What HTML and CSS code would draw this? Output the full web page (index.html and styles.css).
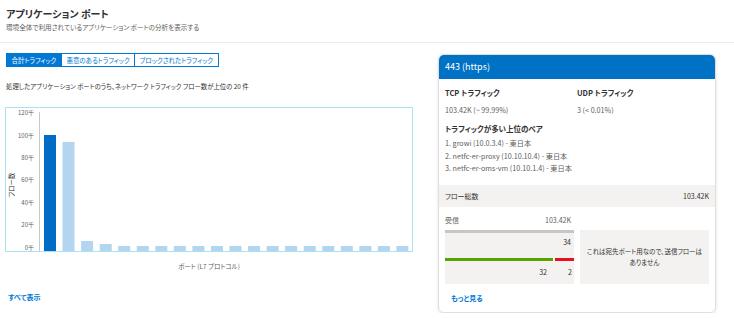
FILE: index.html
```html
<!DOCTYPE html>
<html lang="ja">
<head>
    <meta charset="UTF-8">
    <meta name="viewport" content="width=device-width, initial-scale=1.0">
    <title>アプリケーション ポート</title>
    <link rel="stylesheet" href="styles.css">
</head>
<body>
    <header class="page-head">
        <h1>アプリケーション ポート</h1>
        <p class="sub">環境全体で利用されているアプリケーション ポートの分析を表示する</p>
    </header>
    <main class="content">
        <section class="left">
            <div class="tabs">
                <span class="tab active">合計トラフィック</span>
                <span class="tab">悪意のあるトラフィック</span>
                <span class="tab">ブロックされたトラフィック</span>
            </div>
            <p class="desc">処理したアプリケーション ポートのうち、ネットワーク トラフィック フロー数が上位の 20 件</p>
            <div class="chart">
                <svg width="406" height="143" viewBox="0 0 406 143">
                    <text class="y-title" transform="translate(8 77) rotate(-90)">フロー数</text>
                    <g class="y-labels">
                        <text x="28" y="7">120千</text>
                        <text x="28" y="30">100千</text>
                        <text x="28" y="52">80千</text>
                        <text x="28" y="74">60千</text>
                        <text x="28" y="97">40千</text>
                        <text x="28" y="119">20千</text>
                        <text x="28" y="142">0千</text>
                    </g>
                    <line x1="33.5" y1="4" x2="33.5" y2="143" stroke="#c8c8c8" stroke-width="1"/>
                    <g id="bars"></g>
                </svg>
            </div>
            <p class="x-title">ポート (L7 プロトコル)</p>
            <a class="link" href="#">すべて表示</a>
        </section>

        <aside class="card">
            <div class="card-head">443 (https)</div>
            <div class="card-body">
                <div class="proto">
                    <div>
                        <div class="strong">TCP トラフィック</div>
                        <div class="muted">103.42K (~ 99.99%)</div>
                    </div>
                    <div>
                        <div class="strong">UDP トラフィック</div>
                        <div class="muted">3 (&lt; 0.01%)</div>
                    </div>
                </div>
                <div class="strong pairs-title">トラフィックが多い上位のペア</div>
                <ol class="pairs">
                    <li>1. growi (10.0.3.4) - 東日本</li>
                    <li>2. netfc-er-proxy (10.10.10.4) - 東日本</li>
                    <li>3. netfc-er-oms-vm (10.10.1.4) - 東日本</li>
                </ol>
            </div>
            <div class="total-row">
                <span>フロー総数</span>
                <span>103.42K</span>
            </div>
            <div class="flows">
                <div class="flow-col">
                    <div class="flow-label"><span>受信</span><span>103.42K</span></div>
                    <div class="flow-box">
                        <div class="bar-gray"></div>
                        <div class="num-right">34</div>
                        <div class="split">
                            <div class="seg seg-ok"><div class="bar-green"></div><span>32</span></div>
                            <div class="seg seg-bad"><div class="bar-red"></div><span>2</span></div>
                        </div>
                    </div>
                </div>
                <div class="flow-note"><span class="nowrap">これは宛先ポート用なので、送信フローは</span><span>ありません</span></div>
            </div>
            <a class="link more" href="#">もっと見る</a>
        </aside>
    </main>
    <script>
        // bar heights in px taken from the flow counts
        const heights = [116, 109, 10, 7, 5, 5, 5, 5, 5, 5, 5, 5, 5, 5, 5, 5, 5, 5, 5, 5];
        const g = document.getElementById('bars');
        heights.forEach(function (h, i) {
            const r = document.createElementNS('http://www.w3.org/2000/svg', 'rect');
            r.setAttribute('x', (38 + i * 18.55).toFixed(1));
            r.setAttribute('y', 143 - h);
            r.setAttribute('width', 12);
            r.setAttribute('height', h);
            r.setAttribute('fill', i === 0 ? '#006cc4' : '#b4d5ef');
            g.appendChild(r);
        });
    </script>
</body>
</html>
```

FILE: styles.css
```css
body {
    font-family: "Noto Sans CJK JP", "Noto Sans", sans-serif;
    font-feature-settings: "palt";
    color: #323130;
    background: #fff;
    margin: 0;
}
p, h1, ol {
    margin: 0;
    padding: 0;
}
.page-head {
    height: 43px;
    box-sizing: border-box;
    padding: 7px 6px 0;
    border-bottom: 1px solid #edebe9;
}
.page-head h1 {
    font-size: 10px;
    font-weight: 700;
    line-height: 14px;
}
.sub {
    font-size: 6.6px;
    line-height: 12px;
    color: #605e5c;
}
.content {
    display: flex;
    align-items: flex-start;
}
.left {
    width: 408px;
    padding: 10px 0 0 5px;
}
.tabs {
    display: flex;
    margin-left: 1px;
}
.tab {
    font-size: 6.5px;
    height: 14px;
    line-height: 12px;
    box-sizing: border-box;
    padding: 0 4.5px;
    border: 1px solid #0078d4;
    border-left: none;
    background: #fff;
    color: #0078d4;
}
.tab:first-child {
    border-left: 1px solid #0078d4;
}
.tab.active {
    background: #0078d4;
    color: #fff;
}
.desc {
    font-size: 6.4px;
    line-height: 12px;
    margin: 14px 0 0 1px;
}
.chart {
    margin-top: 14px;
    height: 145px;
    box-sizing: border-box;
    border: 1px solid #a9e2f0;
}
.chart svg {
    display: block;
}
.y-labels text {
    font-size: 6px;
    fill: #605e5c;
    text-anchor: end;
}
.y-title {
    font-size: 6.5px;
    fill: #323130;
    text-anchor: middle;
}
.x-title {
    font-size: 6.5px;
    line-height: 12px;
    text-align: center;
    margin-top: 8px;
    color: #605e5c;
}
.link {
    display: block;
    font-size: 7px;
    line-height: 12px;
    color: #0078d4;
    text-decoration: none;
    font-weight: 700;
}
.left .link {
    margin: 19px 0 0 3px;
}
.card {
    width: 278px;
    margin: 11px 0 0 25px;
    border: 1px solid #e1dfdd;
    border-radius: 6px;
    box-shadow: 0 1px 3px rgba(0, 0, 0, 0.12);
    overflow: hidden;
    box-sizing: border-box;
}
.card-head {
    background: #0072c6;
    color: #fff;
    font-size: 9px;
    height: 24px;
    line-height: 24px;
    padding: 0 6px;
}
.card-body {
    padding: 8px 6px 0;
}
.proto {
    display: grid;
    grid-template-columns: 132px 1fr;
}
.strong {
    font-size: 7.5px;
    font-weight: 700;
    line-height: 12px;
}
.muted {
    font-size: 7.2px;
    line-height: 12px;
    margin-top: 5px;
    color: #605e5c;
}
.pairs-title {
    margin-top: 7px;
}
.pairs {
    list-style: none;
    margin-top: 2px;
    font-size: 7.2px;
    color: #605e5c;
}
.pairs li {
    line-height: 12.5px;
}
.total-row {
    display: flex;
    justify-content: space-between;
    margin-top: 10px;
    background: #f3f2f1;
    height: 22px;
    line-height: 22px;
    padding: 0 6px 0 6px;
    font-size: 7px;
}
.flows {
    display: grid;
    grid-template-columns: 129px 129px;
    gap: 6px;
    padding: 0 6px;
    align-items: end;
}
.flow-label {
    display: flex;
    justify-content: space-between;
    font-size: 7px;
    line-height: 12px;
    padding: 7px 3px 4px 0;
    color: #605e5c;
}
.flow-box {
    background: #f3f2f1;
    height: 54px;
    font-size: 7px;
}
.bar-gray {
    height: 3px;
    background: #c8c6c4;
}
.num-right {
    text-align: right;
    padding: 4px 3px 0 0;
    line-height: 11px;
}
.split {
    display: flex;
    gap: 2px;
    margin-top: 10px;
}
.seg {
    text-align: right;
}
.seg span {
    display: block;
    line-height: 11px;
    margin-top: 6px;
}
.seg-ok {
    width: 108px;
}
.seg-ok span {
    padding-right: 6px;
}
.seg-bad {
    flex: 1;
}
.seg-bad span {
    padding-right: 2px;
}
.bar-green {
    height: 3px;
    background: #57a300;
}
.bar-red {
    height: 3px;
    background: #e81123;
}
.flow-note {
    background: #f3f2f1;
    height: 54px;
    display: flex;
    flex-direction: column;
    align-items: center;
    justify-content: center;
    text-align: center;
    font-size: 6.5px;
    line-height: 11px;
}
.nowrap {
    white-space: nowrap;
}
.more {
    margin: 8px 0 8px 12px;
}
```
